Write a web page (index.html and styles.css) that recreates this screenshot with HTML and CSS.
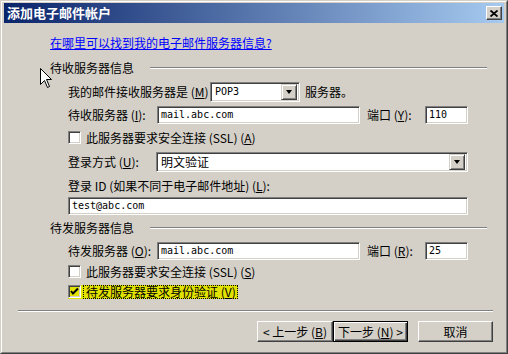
FILE: index.html
```html
<!DOCTYPE html>
<html lang="zh-CN">
  <head>
    <meta charset="UTF-8" />
    <title>添加电子邮件帐户</title>
    <link rel="stylesheet" href="styles.css">
  </head>
  <body>
    <div class="window">
      <div class="frame">
        <div class="titlebar">
          <span class="title">添加电子邮件帐户</span>
          <span class="close">
            <svg width="8" height="7" viewBox="0 0 8 7"><path d="M0.5 0.5 L7.5 6.5 M7.5 0.5 L0.5 6.5" stroke="#000" stroke-width="1.8"/></svg>
          </span>
        </div>

        <div class="content">
          <svg class="cursor" width="13" height="21" viewBox="0 0 13 21">
            <path d="M0.5 0.5 L0.5 16.5 L4.5 12.5 L7.5 19.5 L9.5 18.5 L6.5 11.5 L11.5 11.5 Z" fill="#fff" stroke="#000" stroke-width="1"/>
          </svg>

          <div class="main">
            <div class="line-row help-row">
              <a class="help" href="#">在哪里可以找到我的电子邮件服务器信息?</a>
            </div>

            <div class="group-head head-in">
              <span>待收服务器信息</span>
              <i class="etch"></i>
            </div>

            <div class="rows">
              <div class="row row-m">
                <span class="lbl lbl-m">我的邮件接收服务器是 (<u>M</u>)</span>
                <div class="field select sel-pop"><span class="val mono">POP3</span><span class="drop"><i></i></span></div>
                <span class="after">服务器。</span>
              </div>

              <div class="row row-i">
                <span class="lbl lbl-srv">待收服务器 (<u>I</u>):</span>
                <div class="field input inp-srv"><span class="mono">mail.abc.com</span></div>
                <span class="lbl lbl-port">端口 (<u>Y</u>):</span>
                <div class="field input inp-port"><span class="mono">110</span></div>
              </div>

              <div class="row row-chk1">
                <span class="check"></span>
                <span class="chk-text">此服务器要求安全连接 (SSL) (<u>A</u>)</span>
              </div>

              <div class="row row-login">
                <span class="lbl lbl-login">登录方式 (<u>U</u>):</span>
                <div class="field select sel-login"><span class="val">明文验证</span><span class="drop"><i></i></span></div>
              </div>

              <div class="row row-idl">
                <span>登录 ID (如果不同于电子邮件地址) (<u>L</u>):</span>
              </div>

              <div class="row row-id">
                <div class="field input inp-id"><span class="mono">test@abc.com</span></div>
              </div>
            </div>

            <div class="group-head head-out">
              <span>待发服务器信息</span>
              <i class="etch"></i>
            </div>

            <div class="rows">
              <div class="row row-o">
                <span class="lbl lbl-srv">待发服务器 (<u>O</u>):</span>
                <div class="field input inp-srv"><span class="mono">mail.abc.com</span></div>
                <span class="lbl lbl-port">端口 (<u>R</u>):</span>
                <div class="field input inp-port"><span class="mono">25</span></div>
              </div>

              <div class="row row-chk2">
                <span class="check"></span>
                <span class="chk-text">此服务器要求安全连接 (SSL) (<u>S</u>)</span>
              </div>

              <div class="row row-chk3">
                <span class="hl">
                  <span class="check checked">
                    <svg width="11" height="11" viewBox="0 0 11 11"><path d="M2 5 L4 7.5 L9 2.5" fill="none" stroke="#000" stroke-width="2"/></svg>
                  </span>
                  <span class="chk-text focus">待发服务器要求身份验证 (<u>V</u>)</span>
                </span>
              </div>
            </div>
          </div>

          <div class="sep"></div>

          <div class="buttons">
            <span class="btn btn-back">&lt; 上一步 (<u>B</u>)</span>
            <span class="btn btn-next default">下一步 (<u>N</u>) &gt;</span>
            <span class="btn btn-cancel">取消</span>
          </div>
        </div>
      </div>
    </div>
  </body>
</html>
```

FILE: styles.css
```css
* {
  margin: 0;
  padding: 0;
  box-sizing: border-box;
}

body {
  background: #d4d0c8;
  font: 12px/16px "Noto Sans CJK SC", "Liberation Sans", sans-serif;
  color: #000;
}

u {
  text-decoration: underline;
}

.window {
  width: 508px;
  height: 354px;
  border: 1px solid;
  border-color: #d4d0c8 #404040 #404040 #d4d0c8;
  background: #d4d0c8;
}

.frame {
  height: 100%;
  border: 1px solid;
  border-color: #fff #808080 #808080 #fff;
  padding: 1px 2px 2px 2px;
}

/* 标题栏 */
.titlebar {
  height: 20px;
  display: flex;
  align-items: center;
  justify-content: space-between;
  padding: 0 2px 0 3px;
  background: linear-gradient(to right, #0a246a, #a6caf0);
}

.title {
  color: #fff;
  font-weight: bold;
  font-size: 13px;
  line-height: 16px;
}

.close {
  width: 16px;
  height: 14px;
  display: flex;
  align-items: center;
  justify-content: center;
  background: #d4d0c8;
  border: 1px solid;
  border-color: #fff #404040 #404040 #fff;
  box-shadow: inset -1px -1px #808080;
}

.close svg {
  display: block;
}

/* 内容 */
.content {
  position: relative;
}

.cursor {
  position: absolute;
  left: 36px;
  top: 45px;
}

.main {
  padding: 12px 17px 0 46px;
}

.line-row {
  height: 16px;
  display: flex;
  align-items: center;
}

.help {
  color: #0000ff;
  text-decoration: underline;
}

.group-head {
  height: 16px;
  display: flex;
  align-items: center;
}

.head-in {
  margin-top: 9px;
}

.head-out {
  margin-top: 5px;
}

.etch {
  flex: 1;
  height: 2px;
  margin-left: 16px;
  border-top: 1px solid #808080;
  border-bottom: 1px solid #fff;
}

.rows {
  padding-left: 18px;
}

.row {
  display: flex;
  align-items: center;
}

.row-m { margin-top: 6px; height: 20px; }
.row-i { margin-top: 4px; height: 18px; }
.row-chk1 { margin-top: 5px; height: 17px; }
.row-login { margin-top: 6px; height: 20px; }
.row-idl { margin-top: 6px; height: 16px; }
.row-id { margin-top: 3px; height: 18px; }
.row-o { margin-top: 6px; height: 18px; }
.row-chk2 { margin-top: 3px; height: 17px; }
.row-chk3 { margin-top: 3px; height: 17px; }

.lbl {
  flex: none;
  white-space: nowrap;
}

.lbl-m { width: 142px; }
.lbl-srv { width: 89px; }
.lbl-port { width: 58px; margin-left: 7px; }
.lbl-login { width: 88px; }

.after {
  margin-left: 5px;
}

/* 输入框 */
.field {
  background: #fff;
  border: 1px solid;
  border-color: #808080 #fff #fff #808080;
  box-shadow: inset 1px 1px #404040, inset -1px -1px #d4d0c8;
  display: flex;
  align-items: center;
}

.input {
  height: 18px;
  padding-left: 3px;
}

.mono {
  font: 10px/12px "DejaVu Sans Mono", "Liberation Mono", monospace;
}

.inp-srv { width: 203px; }
.inp-port { width: 43px; }
.inp-id { width: 400px; }

.select {
  height: 20px;
  padding: 2px;
  justify-content: space-between;
}

.select .val {
  padding-left: 2px;
  line-height: 14px;
}

.sel-pop { width: 90px; }
.sel-login { width: 312px; }

.drop {
  width: 16px;
  height: 16px;
  display: flex;
  align-items: center;
  justify-content: center;
  background: #d4d0c8;
  border: 1px solid;
  border-color: #d4d0c8 #404040 #404040 #d4d0c8;
  box-shadow: inset 1px 1px #fff, inset -1px -1px #808080;
}

.drop i {
  width: 0;
  height: 0;
  border-style: solid;
  border-width: 4px 3.5px 0 3.5px;
  border-color: #000 transparent transparent transparent;
}

/* 复选框 */
.check {
  flex: none;
  width: 13px;
  height: 13px;
  background: #fff;
  border: 1px solid;
  border-color: #808080 #fff #fff #808080;
  box-shadow: inset 1px 1px #404040, inset -1px -1px #d4d0c8;
}

.check.checked {
  background: #e2e200;
  display: flex;
  align-items: center;
  justify-content: center;
}

.check.checked svg {
  display: block;
}

.chk-text {
  margin-left: 5px;
  white-space: nowrap;
}

.hl {
  display: flex;
  align-items: center;
  height: 14px;
  background: #e2e200;
}

.chk-text.focus {
  margin-left: 2px;
  padding: 0 1px 0 2px;
  height: 14px;
  line-height: 12px;
  border: 1px dotted #000;
}

/* 分隔线和按钮 */
.sep {
  height: 2px;
  margin: 10px 11px 0 14px;
  border-top: 1px solid #808080;
  border-bottom: 1px solid #fff;
}

.buttons {
  margin-top: 9px;
  display: flex;
  justify-content: flex-end;
  padding-right: 11px;
}

.btn {
  height: 21px;
  display: flex;
  align-items: center;
  justify-content: center;
  white-space: nowrap;
  background: #d4d0c8;
  border: 1px solid;
  border-color: #fff #404040 #404040 #fff;
  box-shadow: inset -1px -1px #808080;
}

.btn-back { width: 76px; }
.btn-next { width: 75px; }
.btn-cancel { width: 75px; margin-left: 10px; }

.btn.default {
  border: 1px solid #000;
  box-shadow: inset 1px 1px #fff, inset -1px -1px #404040, inset -2px -2px #808080;
}
```
